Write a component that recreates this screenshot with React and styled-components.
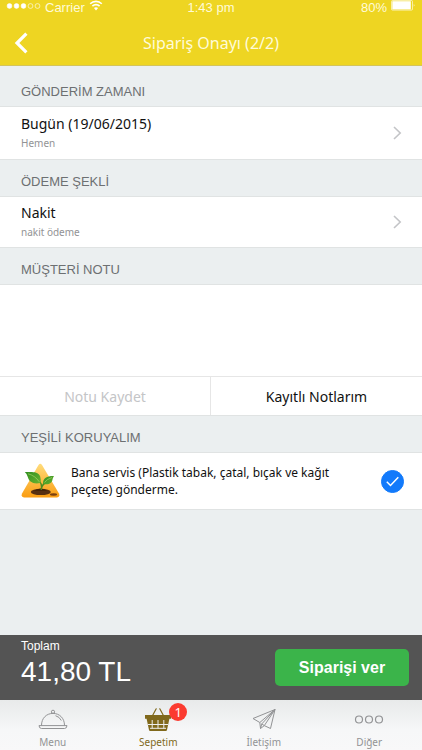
import React, { useState } from 'react'
import styled, { createGlobalStyle } from 'styled-components'

const humanist = '"Noto Sans", "Open Sans", sans-serif'
const grotesk = '"Liberation Sans", Arial, sans-serif'

const GlobalStyle = createGlobalStyle`
  * {
    box-sizing: border-box;
  }
  body {
    margin: 0;
    background: #ebeff0;
    font-family: ${humanist};
  }
  button, textarea, input {
    margin: 0;
    padding: 0;
    border: 0;
    font: inherit;
  }
`

const Screen = styled.div`
  display: flex;
  flex-direction: column;
  min-height: 100vh;
`

const Header = styled.header`
  background: #eed522;
  border-bottom: 1px solid #d3c45c;
  color: #fffbd8;
`

const StatusBar = styled.div`
  display: grid;
  grid-template-columns: 1fr auto 1fr;
  height: 15px;
  padding: 0 6px;
  font: 13px/15px ${grotesk};

  svg {
    margin-bottom: 3px;
  }
`

const StatusGroup = styled.div`
  display: flex;
  align-items: center;
  justify-content: ${({ $end }) => ($end ? 'flex-end' : 'flex-start')};
  gap: 4px;
`

const NavBar = styled.div`
  display: grid;
  grid-template-columns: 48px 1fr 48px;
  align-items: center;
  height: 50px;
  padding-top: 6px;
`

const BackButton = styled.button`
  display: flex;
  align-items: center;
  height: 44px;
  padding-left: 14px;
  background: none;
  color: #fff;
`

const Title = styled.h1`
  margin: 0;
  font-size: 16px;
  font-weight: 400;
  line-height: 24px;
  text-align: center;
`

const Main = styled.main`
  flex: 1;
`

const SectionTitle = styled.h2`
  display: flex;
  align-items: flex-end;
  height: ${({ $first }) => ($first ? 41 : 37)}px;
  margin: 0;
  padding: 0 21px 5px;
  border-bottom: 1px solid #e0e3e3;
  color: #6d7072;
  font: 400 13px/18px ${grotesk};
`

const OptionRow = styled.button`
  display: flex;
  align-items: center;
  justify-content: space-between;
  width: 100%;
  height: ${({ $tall }) => ($tall ? 53 : 51)}px;
  padding: 0 20px 0 21px;
  border-bottom: 1px solid #e0e3e3;
  background: #fff;
  color: #c3c4c7;
  text-align: left;
`

const OptionText = styled.span`
  display: flex;
  flex-direction: column;
`

const OptionName = styled.span`
  color: #111;
  font-size: 14px;
  line-height: 20px;
`

const OptionDetail = styled.span`
  color: #929395;
  font-size: 10px;
  line-height: 18px;
`

const Note = styled.textarea`
  display: block;
  width: 100%;
  height: 91px;
  padding: 8px 21px;
  background: #fff;
  font-size: 14px;
  resize: none;
  outline: none;
`

const NoteActions = styled.div`
  display: grid;
  grid-template-columns: 1fr 1fr;
  border-top: 1px solid #e6e6e6;
  border-bottom: 1px solid #e0e3e3;
`

const NoteButton = styled.button`
  height: 38px;
  background: #fff;
  color: #111;
  font-size: 14px;

  &:disabled {
    border-right: 1px solid #e6e6e6;
    color: #c4c5c7;
  }
`

const GreenRow = styled.label`
  display: flex;
  align-items: center;
  min-height: 57px;
  padding: 0 18px 0 20px;
  border-bottom: 1px solid #e0e3e3;
  background: #fff;
  color: #111;
  font-size: 12px;
  line-height: 17px;
`

const GreenText = styled.span`
  flex: 1;
  padding: 0 32px 0 10px;
`

const Tick = styled.span`
  display: grid;
  place-items: center;

  > * {
    grid-area: 1 / 1;
  }
  svg {
    pointer-events: none;
  }
`

const TickInput = styled.input`
  width: 23px;
  height: 23px;
  border: 1px solid #c3c4c7;
  border-radius: 50%;
  appearance: none;

  &:checked {
    border-color: #127afb;
    background: #127afb;
  }
`

const TotalBar = styled.section`
  display: flex;
  align-items: center;
  justify-content: space-between;
  height: 65px;
  padding: 0 13px 0 21px;
  background: #545454;
  color: #fff;
  font-family: ${grotesk};
`

const TotalText = styled.div`
  padding-bottom: 8px;
`

const TotalLabel = styled.div`
  font-size: 12px;
  line-height: 16px;
`

const TotalValue = styled.div`
  font-size: 28px;
  line-height: 36px;
`

const OrderButton = styled.button`
  width: 134px;
  height: 37px;
  border-radius: 5px;
  background: #3bb44a;
  color: #fff;
  font-size: 16px;
  font-weight: 700;
`

const TabBar = styled.nav`
  display: grid;
  grid-template-columns: repeat(4, 1fr);
  height: 50px;
  background: linear-gradient(#e8eaea, #f6f7f8 60%, #f8f8f9);
`

const Tab = styled.a`
  display: flex;
  flex-direction: column;
  align-items: center;
  padding-top: 7px;
  color: ${({ $active }) => ($active ? '#80691c' : '#929395')};
  font-size: 10px;
  line-height: 14px;
  text-decoration: none;
`

const TabIcon = styled.span`
  position: relative;
  height: 28px;
`

const Badge = styled.span`
  position: absolute;
  top: -4px;
  right: -15px;
  width: 18px;
  height: 18px;
  border-radius: 50%;
  background: #fb3b30;
  color: #fff;
  font-size: 13px;
  line-height: 18px;
  text-align: center;
`

const SignalIcon = () => (
  <svg width="35" height="8" fill="#fff" stroke="#fff" strokeWidth=".6">
    <circle cx="3.5" cy="4" r="2.4" />
    <circle cx="10.5" cy="4" r="2.4" />
    <circle cx="17.5" cy="4" r="2.4" />
    <circle cx="24.5" cy="4" r="2.4" fill="none" />
    <circle cx="31.5" cy="4" r="2.4" fill="none" />
  </svg>
)

const WifiIcon = () => (
  <svg width="14" height="12" fill="none" stroke="#fff" strokeWidth="1.6">
    <path d="M1.2 3.8C4.5 .5 9.5 .5 12.8 3.8" />
    <path d="M3.4 6.1C5.4 4.1 8.6 4.1 10.6 6.1" />
    <path d="M4.9 8.1Q7 6.2 9.1 8.1L7 10.4Z" fill="#fff" stroke="none" />
  </svg>
)

const BatteryIcon = () => (
  <svg width="25" height="12" fill="#fff">
    <rect x=".5" y=".5" width="21" height="9.6" rx="1" fill="none" stroke="#fff" strokeWidth=".6" />
    <rect x="1.3" y="1.2" width="18.5" height="8.2" />
    <path d="M22.8 4q1.4 1.3 0 2.8z" />
  </svg>
)

const BackIcon = () => (
  <svg width="14" height="22" fill="none" stroke="currentColor" strokeWidth="3.2">
    <path d="M12.4 1.6L3 11L12.4 20.4" />
  </svg>
)

const ChevronIcon = () => (
  <svg width="12" height="14" fill="none" stroke="currentColor" strokeWidth="1.6">
    <path d="M4 1L10.2 7L4 13" />
  </svg>
)

const SproutIcon = () => (
  <svg width="41" height="36">
    <defs>
      <linearGradient id="sign" x1="0" y1="0" x2="0" y2="1">
        <stop offset="0" stopColor="#ffdc7c" />
        <stop offset="1" stopColor="#fa9d12" />
      </linearGradient>
      <linearGradient id="leaf" x1="0" y1="0" x2="1" y2="1">
        <stop offset="0" stopColor="#2f8f20" />
        <stop offset="1" stopColor="#6cb32f" />
      </linearGradient>
    </defs>
    <path d="M18.5 2Q20.3 -.4 22 2L39 30.5Q40.2 34.3 37 34.5H4Q.8 34.3 2 30.5Z" fill="url(#sign)" />
    <ellipse cx="20.8" cy="28.9" rx="10" ry="3.2" fill="#573012" />
    <path d="M13.500 28Q21 23 27.500 28Z" fill="#442409" />
    <ellipse cx="33.500" cy="31.500" rx="3.600" ry="1.200" fill="#7b400f" />
    <path d="M21.300 27C22 22 21.500 19 18 17M21.500 25.500C22 21 25 19.500 28 18" fill="none" stroke="#4d8b20" strokeWidth="1.400" />
    <path d="M4.800 9C10 9.500 17.500 7.500 20.200 13.500Q21.300 16.500 20.300 20C13 21.500 8.800 18.500 7.800 14Q7.200 11 4.800 9Z" fill="url(#leaf)" />
    <path d="M34 13C27.500 12.800 23 14.500 23 20.800C28.500 22.500 32 20 32.500 16.500Q32.800 14.500 34 13Z" fill="url(#leaf)" />
    <path d="M8 10.800Q15 12.500 19.300 18.800M32 14.500Q27 16 24.500 19.500" fill="none" stroke="#b4dc72" strokeWidth=".6" />
  </svg>
)

const TickIcon = () => (
  <svg width="13" height="11" fill="none" stroke="#fff" strokeWidth="1.5">
    <path d="M.8 5.8L4.5 9.5L12.3 1.3" />
  </svg>
)

const ClocheIcon = () => (
  <svg width="30" height="24" fill="none" stroke="currentColor" strokeWidth="1">
    <circle cx="15" cy="4.8" r="1.6" />
    <path d="M3.5 18.5C3.5 11 8.6 6.4 15 6.4S26.5 11 26.5 18.5" />
    <path d="M1 18.6H29Q28.8 21.5 26.5 21.5H3.5Q1.2 21.5 1 18.6Z" />
    <path d="M17.5 8.7Q21.5 9.7 23.3 13.5" />
  </svg>
)

const BasketIcon = () => (
  <svg width="28" height="25">
    <path d="M8.3 9L12.2 1.8M19.7 9L15.8 1.8" fill="none" stroke="currentColor" strokeWidth="1.2" strokeLinecap="round" />
    <path d="M1 8H27V11.8H25.4L23 23Q22.800 24 21.800 24H6.200Q5.200 24 5 23L2.600 11.800H1Z" fill="currentColor" />
    <path
      d="M4.200 13.500H8M9.400 13.500H13.300M14.700 13.500H18.600M20 13.500H23.800"
      stroke="currentColor"
      strokeWidth=".5"
    />
    <path
      d="M4 17.500H24M8.200 13V21.500M14 13V21.500M19.800 13V21.500M6 21.300H22"
      stroke="#eff0f0"
      strokeWidth="1"
    />
  </svg>
)

const PlaneIcon = () => (
  <svg width="24" height="23" fill="none" stroke="currentColor" strokeWidth="1" strokeLinejoin="round">
    <path d="M1 11.5L23 2.5L18.5 21.5L12.3 18.6L8.5 21.5L7.8 15.5Z" />
    <path d="M7.8 15.5L23 2.5L9.8 16.9L8.5 21.5M9.8 16.9L12.3 18.6M12.3 18.6L23 2.5" />
  </svg>
)

const MoreIcon = () => (
  <svg width="30" height="24" fill="none" stroke="currentColor" strokeWidth="1.2">
    <circle cx="5" cy="12.5" r="3.5" />
    <circle cx="15" cy="12.5" r="3.5" />
    <circle cx="25" cy="12.5" r="3.5" />
  </svg>
)

const Option = ({ name, detail, tall }) => (
  <OptionRow type="button" $tall={tall}>
    <OptionText>
      <OptionName>{name}</OptionName>
      <OptionDetail>{detail}</OptionDetail>
    </OptionText>
    <ChevronIcon />
  </OptionRow>
)

const tabs = [
  { id: 'menu', label: 'Menu', Icon: ClocheIcon },
  { id: 'sepetim', label: 'Sepetim', Icon: BasketIcon, badge: 1, active: true },
  { id: 'iletisim', label: 'İletişim', Icon: PlaneIcon },
  { id: 'diger', label: 'Diğer', Icon: MoreIcon },
]

export default () => {
  const [note, setNote] = useState('')
  const [noService, setNoService] = useState(true)

  return (
    <Screen lang="tr">
      <GlobalStyle />
      <Header>
        <StatusBar>
          <StatusGroup>
            <SignalIcon />
            <span>Carrier</span>
            <WifiIcon />
          </StatusGroup>
          <span>1:43 pm</span>
          <StatusGroup $end>
            <span>80%</span>
            <BatteryIcon />
          </StatusGroup>
        </StatusBar>
        <NavBar>
          <BackButton type="button" aria-label="Geri">
            <BackIcon />
          </BackButton>
          <Title>Sipariş Onayı (2/2)</Title>
        </NavBar>
      </Header>
      <Main>
        <SectionTitle $first>GÖNDERİM ZAMANI</SectionTitle>
        <Option name="Bugün (19/06/2015)" detail="Hemen" tall />
        <SectionTitle>ÖDEME ŞEKLİ</SectionTitle>
        <Option name="Nakit" detail="nakit ödeme" />
        <SectionTitle as="label" htmlFor="note">MÜŞTERİ NOTU</SectionTitle>
        <Note id="note" value={note} onChange={e => setNote(e.target.value)} />
        <NoteActions>
          <NoteButton type="button" disabled={!note}>Notu Kaydet</NoteButton>
          <NoteButton type="button">Kayıtlı Notlarım</NoteButton>
        </NoteActions>
        <SectionTitle>YEŞİLİ KORUYALIM</SectionTitle>
        <GreenRow>
          <SproutIcon />
          <GreenText>Bana servis (Plastik tabak, çatal, bıçak ve kağıt peçete) gönderme.</GreenText>
          <Tick>
            <TickInput
              type="checkbox"
              checked={noService}
              onChange={e => setNoService(e.target.checked)}
            />
            {noService && <TickIcon />}
          </Tick>
        </GreenRow>
      </Main>
      <TotalBar>
        <TotalText>
          <TotalLabel>Toplam</TotalLabel>
          <TotalValue>41,80 TL</TotalValue>
        </TotalText>
        <OrderButton type="button">Siparişi ver</OrderButton>
      </TotalBar>
      <TabBar>
        {tabs.map(({ id, label, Icon, badge, active }) => (
          <Tab key={id} href={`#${id}`} $active={active}>
            <TabIcon>
              <Icon />
              {badge && <Badge>{badge}</Badge>}
            </TabIcon>
            {label}
          </Tab>
        ))}
      </TabBar>
    </Screen>
  )
}
